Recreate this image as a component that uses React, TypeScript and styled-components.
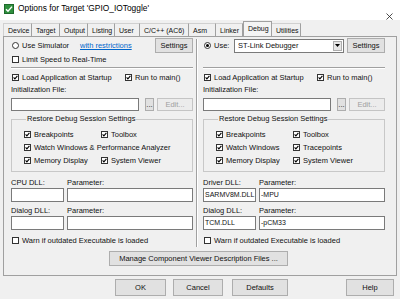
import React from 'react'
import styled, { createGlobalStyle } from 'styled-components'

const GlobalStyle = createGlobalStyle`
  html, body {
    margin: 0;
    padding: 0;
    background: #f0f0f0;
  }
  body {
    font-family: "Liberation Sans", Arial, sans-serif;
    font-size: 7.5px;
    color: #111;
  }
  * {
    box-sizing: border-box;
  }
`

const tabs = [
  { label: 'Device', w: 29 },
  { label: 'Target', w: 28 },
  { label: 'Output', w: 28 },
  { label: 'Listing', w: 27 },
  { label: 'User', w: 25 },
  { label: 'C/C++ (AC6)', w: 49 },
  { label: 'Asm', w: 27 },
  { label: 'Linker', w: 27 },
  { label: 'Debug', w: 29, active: true },
  { label: 'Utilities', w: 29 },
]

type ColumnData = {
  side: 'left' | 'right'
  groupRows: [string, string][]
  dllLabel: string
  dllValue: string
  paramValue: string
  dialogValue: string
  dialogParam: string
}

const columns: ColumnData[] = [
  {
    side: 'left',
    groupRows: [
      ['Breakpoints', 'Toolbox'],
      ['Watch Windows & Performance Analyzer', ''],
      ['Memory Display', 'System Viewer'],
    ],
    dllLabel: 'CPU DLL:',
    dllValue: '',
    paramValue: '',
    dialogValue: '',
    dialogParam: '',
  },
  {
    side: 'right',
    groupRows: [
      ['Breakpoints', 'Toolbox'],
      ['Watch Windows', 'Tracepoints'],
      ['Memory Display', 'System Viewer'],
    ],
    dllLabel: 'Driver DLL:',
    dllValue: 'SARMV8M.DLL',
    paramValue: '-MPU',
    dialogValue: 'TCM.DLL',
    dialogParam: '-pCM33',
  },
]

const CheckMark = () => (
  <svg width="5" height="5" viewBox="0 0 5 5">
    <path d="M0.6 2.4 L1.9 3.8 L4.4 0.8" fill="none" stroke="#000" strokeWidth="1.1" />
  </svg>
)

const Check: React.FC<{ checked?: boolean; label: string; w?: number }> = ({ checked, label, w }) => (
  <CheckItem $w={w}>
    <Box>{checked && <CheckMark />}</Box>
    <span>{label}</span>
  </CheckItem>
)

const Option: React.FC<{ selected?: boolean; label: string; w?: number }> = ({ selected, label, w }) => (
  <CheckItem $w={w}>
    <Round>{selected && <Dot />}</Round>
    <span>{label}</span>
  </CheckItem>
)

const DebugColumn: React.FC<{ data: ColumnData }> = ({ data }) => {
  const left = data.side === 'left'
  return (
    <Column $side={data.side}>
      <Row $h={15}>
        {left ? (
          <>
            <Option label="Use Simulator" w={69} />
            <Link>with restrictions</Link>
            <Button $w={38} $h={15} $ml="auto">
              Settings
            </Button>
          </>
        ) : (
          <>
            <Option selected label="Use:" w={30} />
            <Combo>
              <span>ST-Link Debugger</span>
              <ComboArrow>
                <svg width="5" height="3" viewBox="0 0 5 3">
                  <path d="M0 0 H5 L2.5 3 Z" fill="#000" />
                </svg>
              </ComboArrow>
            </Combo>
            <Button $w={38} $h={15} $ml="3px">
              Settings
            </Button>
          </>
        )}
      </Row>
      <Row $h={13}>{left && <Check label="Limit Speed to Real-Time" />}</Row>
      <Separator />
      <Row $h={14}>
        <Check checked label="Load Application at Startup" w={113} />
        <Check checked label="Run to main()" />
      </Row>
      <Label $h={12}>Initialization File:</Label>
      <InputRow>
        <Input />
        <Button $w={9} $h={13} $ml="6px">
          ...
        </Button>
        <Button $w={36} $h={13} $ml="3px" $disabled>
          Edit...
        </Button>
      </InputRow>
      <Group>
        <Legend>Restore Debug Session Settings</Legend>
        <GroupGrid>
          {data.groupRows.map(([a, b]) => (
            <React.Fragment key={a}>
              <Check checked label={a} />
              {b ? <Check checked label={b} /> : <span />}
            </React.Fragment>
          ))}
        </GroupGrid>
      </Group>
      <DllGrid>
        <Label $h={10}>{data.dllLabel}</Label>
        <Label $h={10}>Parameter:</Label>
        <Input $h={14}>{data.dllValue}</Input>
        <Input $h={14}>{data.paramValue}</Input>
        <Label $h={10}>Dialog DLL:</Label>
        <Label $h={10}>Parameter:</Label>
        <Input $h={14}>{data.dialogValue}</Input>
        <Input $h={14}>{data.dialogParam}</Input>
      </DllGrid>
      <Row $h={14} $mt={3}>
        <Check label="Warn if outdated Executable is loaded" />
      </Row>
    </Column>
  )
}

const App: React.FC = () => {
  return (
    <Window>
      <GlobalStyle />
      <TitleBar>
        <svg width="10" height="10" viewBox="0 0 10 10">
          <rect x="0" y="0" width="10" height="10" fill="#2f8f3e" />
          <rect x="0.5" y="0.5" width="9" height="9" fill="none" stroke="#1d6a2a" />
          <path d="M2 5.2 L4 7.3 L8 2.6" fill="none" stroke="#fff" strokeWidth="1.4" />
        </svg>
        <TitleText>Options for Target 'GPIO_IOToggle'</TitleText>
        <Close>
          <svg width="7" height="7" viewBox="0 0 7 7">
            <path d="M0.5 0.5 L6.5 6.5 M6.5 0.5 L0.5 6.5" stroke="#222" strokeWidth="0.8" />
          </svg>
        </Close>
      </TitleBar>
      <TabBar>
        {tabs.map((t, i) => (
          <Tab key={t.label} $w={t.w} $active={t.active} $first={i === 0}>
            {t.label}
          </Tab>
        ))}
      </TabBar>
      <Panel>
        <Columns>
          <DebugColumn data={columns[0]} />
          <Divider />
          <DebugColumn data={columns[1]} />
        </Columns>
        <ManageRow>
          <Button $w={179} $h={15}>
            Manage Component Viewer Description Files ...
          </Button>
        </ManageRow>
      </Panel>
      <Footer>
        <Button $w={51} $h={17}>
          OK
        </Button>
        <Button $w={50} $h={17} $ml="7px">
          Cancel
        </Button>
        <Button $w={56} $h={17} $ml="9px">
          Defaults
        </Button>
        <Button $w={48} $h={17} $ml="auto">
          Help
        </Button>
      </Footer>
    </Window>
  )
}

const Window = styled.div`
  width: 400px;
  height: 299px;
  display: flex;
  flex-direction: column;
  background: #f0f0f0;
  overflow: hidden;
`

const TitleBar = styled.div`
  height: 20px;
  flex: none;
  display: flex;
  align-items: flex-start;
  padding: 4px 7px 0 4px;
  background: #fff;
`

const TitleText = styled.span`
  margin-left: 4px;
  font-size: 8.4px;
  line-height: 9px;
  color: #000;
`

const Close = styled.span`
  margin-left: auto;
  margin-top: 9px;
  display: flex;
`

const TabBar = styled.div`
  height: 16px;
  flex: none;
  display: flex;
  align-items: flex-end;
  padding-left: 3px;
`

const Tab = styled.div<{ $w: number; $active?: boolean; $first?: boolean }>`
  width: ${(p) => p.$w}px;
  height: ${(p) => (p.$active ? 15 : 13)}px;
  padding-left: 4px;
  font-size: 7px;
  line-height: 13px;
  white-space: nowrap;
  overflow: hidden;
  border-right: 1px solid #a0a0a0;
  border-left: ${(p) => (p.$first ? '1px solid #d0d0d0' : 'none')};
  border-top: 1px solid #d0d0d0;
  background: ${(p) => (p.$active ? '#f4f4f4' : '#f0f0f0')};
  ${(p) =>
    p.$active &&
    `
    border-left: 1px solid #a0a0a0;
    border-top: 1px solid #a0a0a0;
  `}
`

const Panel = styled.div`
  margin: 0 3px;
  height: 240px;
  flex: none;
  border: 1px solid #a0a0a0;
  display: flex;
  flex-direction: column;
`

const Columns = styled.div`
  display: grid;
  grid-template-columns: 192px 2px 1fr;
`

const Column = styled.div<{ $side: 'left' | 'right' }>`
  display: flex;
  flex-direction: column;
  padding: ${(p) => (p.$side === 'left' ? '1px 3px 0 7px' : '1px 11px 0 5px')};
`

const Divider = styled.div`
  border-left: 1px solid #a0a0a0;
  border-right: 1px solid #fff;
  margin: 2px 0 0;
`

const Row = styled.div<{ $h: number; $mt?: number }>`
  height: ${(p) => p.$h}px;
  margin-top: ${(p) => p.$mt ?? 0}px;
  display: flex;
  align-items: center;
  white-space: nowrap;
`

const Separator = styled.div`
  height: 2px;
  margin: 1px 0;
  border-top: 1px solid #a0a0a0;
  border-bottom: 1px solid #fff;
`

const CheckItem = styled.div<{ $w?: number }>`
  display: flex;
  align-items: center;
  gap: 3px;
  width: ${(p) => (p.$w ? `${p.$w}px` : 'auto')};
  flex: none;
  white-space: nowrap;
`

const Box = styled.span`
  width: 7px;
  height: 7px;
  margin-left: 1px;
  border: 1px solid #333;
  background: #fff;
  display: flex;
  align-items: center;
  justify-content: center;
`

const Round = styled.span`
  width: 7px;
  height: 7px;
  margin-left: 1px;
  border: 1px solid #333;
  border-radius: 50%;
  background: #fff;
  display: flex;
  align-items: center;
  justify-content: center;
`

const Dot = styled.span`
  width: 3px;
  height: 3px;
  border-radius: 50%;
  background: #000;
`

const Link = styled.span`
  color: #0066cc;
  text-decoration: underline;
`

const Button = styled.div<{ $w: number; $h: number; $ml?: string; $disabled?: boolean }>`
  width: ${(p) => p.$w}px;
  height: ${(p) => p.$h}px;
  margin-left: ${(p) => p.$ml ?? '0'};
  flex: none;
  display: flex;
  align-items: center;
  justify-content: center;
  white-space: nowrap;
  background: ${(p) => (p.$disabled ? '#ececec' : '#e1e1e1')};
  border: 1px solid ${(p) => (p.$disabled ? '#c4c4c4' : '#adadad')};
  color: ${(p) => (p.$disabled ? '#a0a0a0' : '#111')};
`

const Combo = styled.div`
  margin-left: 1px;
  width: 110px;
  height: 14px;
  display: flex;
  align-items: center;
  padding-left: 3px;
  background: #fff;
  border: 1px solid #7a7a7a;
  span {
    flex: 1;
  }
`

const ComboArrow = styled.div`
  width: 9px;
  height: 10px;
  margin-right: 1px;
  display: flex;
  align-items: center;
  justify-content: center;
  background: #e6e6e6;
  border: 1px solid #adadad;
`

const Label = styled.div<{ $h: number }>`
  height: ${(p) => p.$h}px;
  line-height: ${(p) => p.$h}px;
  white-space: nowrap;
`

const InputRow = styled.div`
  margin-top: 2px;
  display: flex;
`

const Input = styled.div<{ $h?: number }>`
  flex: 1;
  height: ${(p) => p.$h ?? 13}px;
  line-height: ${(p) => (p.$h ?? 13) - 2}px;
  padding-left: 1px;
  font-size: 7px;
  background: #fff;
  border: 1px solid #7a7a7a;
  white-space: nowrap;
  overflow: hidden;
`

const Group = styled.fieldset`
  margin: 2px 0 0;
  padding: 3px 0 4px 11px;
  border: 1px solid #c8c8c8;
  min-width: 0;
`

const Legend = styled.legend`
  padding: 0 1px;
  margin-left: 3px;
  line-height: 12px;
  white-space: nowrap;
`

const GroupGrid = styled.div`
  display: grid;
  grid-template-columns: 77px 1fr;
  grid-auto-rows: 13px;
  align-items: center;
`

const DllGrid = styled.div`
  margin-top: 5px;
  display: grid;
  grid-template-columns: 53px 1fr;
  grid-template-rows: 11px 14px 14px 14px;
  column-gap: 3px;
  ${Label} {
    align-self: end;
    height: 10px;
    line-height: 10px;
  }
`

const ManageRow = styled.div`
  margin-top: 4px;
  display: flex;
  justify-content: center;
  padding-right: 3px;
`

const Footer = styled.div`
  flex: none;
  display: flex;
  align-items: flex-start;
  padding: 3px 6px 0 115px;
`

export default App
